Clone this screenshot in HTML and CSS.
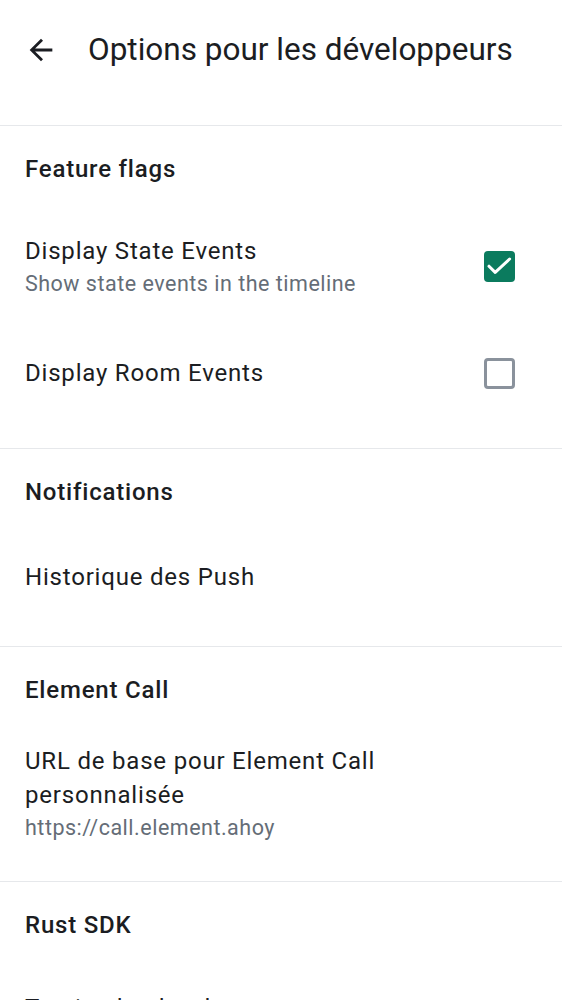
FILE: index.html
```html
<!DOCTYPE html>
<html lang="fr">
<head>
<meta charset="utf-8">
<title>Options pour les développeurs</title>
<link rel="stylesheet" href="styles.css">
</head>
<body>
<div class="screen">
  <header class="topbar">
    <span class="nav-icon">
      <svg viewBox="0 0 24 24" width="34" height="34"><path d="M20 11H7.83l5.59-5.59L12 4l-8 8 8 8 1.41-1.41L7.83 13H20v-2z" fill="#1b1d22"/></svg>
    </span>
    <h1 class="title">Options pour les développeurs</h1>
  </header>

  <main class="content">
    <section class="section">
      <h2 class="section-title">Feature flags</h2>
      <div class="item item-two">
        <div class="item-text">
          <div class="item-title">Display State Events</div>
          <div class="item-sub">Show state events in the timeline</div>
        </div>
        <span class="check-target"><span class="checkbox checked">
          <svg viewBox="0 0 31 31" width="31" height="31"><path d="M5 15.2l6.2 6.2L25.6 8" fill="none" stroke="#fff" stroke-width="3" stroke-linecap="round" stroke-linejoin="round"/></svg>
        </span></span>
      </div>
      <div class="item">
        <div class="item-text">
          <div class="item-title">Display Room Events</div>
        </div>
        <span class="check-target"><span class="checkbox"></span></span>
      </div>
    </section>

    <section class="section">
      <h2 class="section-title">Notifications</h2>
      <div class="item">
        <div class="item-text">
          <div class="item-title">Historique des Push</div>
        </div>
      </div>
    </section>

    <section class="section">
      <h2 class="section-title">Element Call</h2>
      <div class="item">
        <div class="item-text">
          <div class="item-title">URL de base pour Element Call personnalisée</div>
          <div class="item-sub">https://call.element.ahoy</div>
        </div>
      </div>
    </section>

    <section class="section">
      <h2 class="section-title">Rust SDK</h2>
      <div class="item item-top">
        <div class="item-text">
          <div class="item-title">Tracing log level</div>
        </div>
      </div>
    </section>
  </main>
</div>
</body>
</html>
```

FILE: styles.css
```css
* { box-sizing: border-box; }

html, body {
  margin: 0;
  padding: 0;
  background: #ffffff;
}

body {
  font-family: Roboto, "Liberation Sans", sans-serif;
  color: #1b1d22;
  overflow: hidden;
}

.screen {
  width: 562px;
  height: 1000px;
  overflow: hidden;
}

.topbar {
  height: 100px;
  display: flex;
  align-items: center;
  padding-left: 23.5px;
}

.nav-icon {
  width: 34px;
  height: 34px;
  display: flex;
  align-items: center;
  justify-content: center;
}

.nav-icon svg { display: block; }

.title {
  margin: 0 0 0 30.5px;
  font-size: 31.5px;
  font-weight: 400;
  line-height: 40px;
  color: #1b1d22;
  letter-spacing: 0;
}

.content {
  padding-top: 25px;
}

.section {
  border-top: 1px solid #e6e8eb;
  padding-bottom: 25px;
}

.section-title {
  margin: 0;
  padding: 28px 25px 26.5px;
  font-size: 24px;
  line-height: 30px;
  font-weight: 500;
  letter-spacing: 0.8px;
  color: #1b1d22;
}

.item {
  display: flex;
  align-items: center;
  min-height: 87.5px;
  padding: 12.5px 25px;
  gap: 16px;
}

.item-two {
  min-height: 112.5px;
}

.item-top {
  align-items: flex-start;
  padding-top: 25px;
}

.item-text {
  flex: 1;
  min-width: 0;
}

.item-title {
  font-size: 24px;
  line-height: 34px;
  letter-spacing: 0.8px;
  color: #1b1d22;
}

.item-sub {
  font-size: 21.5px;
  line-height: 31px;
  letter-spacing: 0.5px;
  color: #656d77;
}

.check-target {
  width: 75px;
  height: 75px;
  display: flex;
  align-items: center;
  justify-content: center;
}

.checkbox {
  width: 31px;
  height: 31px;
  border: 3px solid #8a929c;
  border-radius: 4px;
  display: flex;
  align-items: center;
  justify-content: center;
}

.checkbox.checked {
  background: #0b7b5e;
  border: 0;
}

.checkbox svg { display: block; }
```
